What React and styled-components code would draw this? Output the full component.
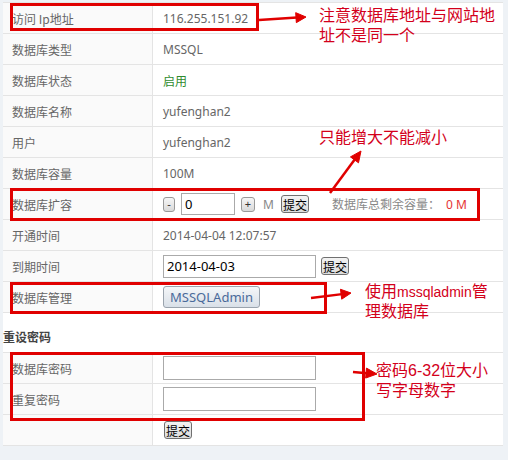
import React from 'react';
import styled, { createGlobalStyle } from 'styled-components';

const GlobalStyle = createGlobalStyle`
  body {
    margin: 0;
    background: #eef2f6;
    font-family: "Noto Sans", "Noto Sans CJK SC", sans-serif;
  }
`;

const Page = styled.div`
  position: relative;
  width: 508px;
  height: 460px;
  overflow: hidden;
  background: #eef2f6;
`;

const Panel = styled.div`
  margin: 2px 0 0 3px;
  width: 500px;
  background: #fff;
  border-top: 1px solid #e4e4e4;
`;

const Row = styled.div`
  display: grid;
  grid-template-columns: 150px 1fr;
  height: 31px;
  box-sizing: border-box;
  border-bottom: 1px solid #e4e4e4;
`;

const Label = styled.div`
  display: flex;
  align-items: center;
  padding-left: 9px;
  background: #fafafa;
  border-right: 1px solid #e4e4e4;
  color: #666;
  font-size: 12px;
  font-family: "Noto Sans CJK SC", sans-serif;
`;

const Value = styled.div`
  display: flex;
  align-items: center;
  gap: ${(p) => p.$gap ?? 6}px;
  padding-left: 10px;
  color: ${(p) => p.$color || '#666'};
  font-size: 12px;
`;

const SectionTitle = styled.div`
  height: 40px;
  box-sizing: border-box;
  display: flex;
  align-items: flex-end;
  padding: 0 0 7px 0;
  border-bottom: 1px solid #e4e4e4;
  color: #444;
  font-size: 12px;
  font-weight: 700;
  line-height: 16px;
  font-family: "Noto Sans CJK SC", sans-serif;
`;

const TextInput = styled.input`
  box-sizing: border-box;
  width: ${(p) => p.$w}px;
  height: ${(p) => p.$h}px;
  border: 1px solid #aaa;
  padding: 0 3px;
  font-size: 13px;
  font-family: "Noto Sans", sans-serif;
  color: #000;
  background: #fff;
  outline: none;
`;

const StepButton = styled.button`
  box-sizing: border-box;
  width: ${(p) => p.$w}px;
  height: 15px;
  padding: 0;
  border: 1px solid #999;
  border-radius: 3px;
  background: linear-gradient(#f6f6f6, #d9d9d9);
  color: #333;
  font-size: 11px;
  line-height: 12px;
  font-family: "Noto Sans", sans-serif;
`;

const SubmitButton = styled.button`
  box-sizing: border-box;
  width: 28px;
  height: 18px;
  padding: 0;
  border: 1px solid #707070;
  border-radius: 3px;
  background: linear-gradient(#f3f3f3, #dcdcdc);
  color: #000;
  font-size: 12px;
  line-height: 15px;
  white-space: nowrap;
  font-family: "Noto Sans CJK SC", sans-serif;
  margin-left: ${(p) => p.$ml || 0}px;
`;

const AdminButton = styled.button`
  box-sizing: border-box;
  width: 97px;
  height: 22px;
  padding: 0;
  border: 1px solid #9aa3ad;
  border-radius: 3px;
  background: linear-gradient(#f4f6f8, #d9e0e8);
  color: #4a6a9a;
  font-size: 13px;
  font-family: "Noto Sans", sans-serif;
`;

const Unit = styled.span`
  color: #888;
  font-size: 12px;
  margin: 0 1px 0 2px;
`;

const Remain = styled.span`
  margin-left: 17px;
  color: #888;
  font-family: "Noto Sans CJK SC", sans-serif;
`;

const RemainValue = styled.span`
  color: #e53333;
  margin-left: 6px;
  font-family: "Noto Sans", sans-serif;
`;

const Overlay = styled.div`
  position: absolute;
  inset: 0;
  pointer-events: none;
`;

const Box = styled.div`
  position: absolute;
  box-sizing: border-box;
  left: ${(p) => p.$x}px;
  top: ${(p) => p.$y}px;
  width: ${(p) => p.$w}px;
  height: ${(p) => p.$h}px;
  border: 3px solid #e00000;
`;

const Note = styled.div`
  position: absolute;
  left: ${(p) => p.$x}px;
  top: ${(p) => p.$y}px;
  color: #d3001b;
  font-size: 16px;
  line-height: 20px;
  white-space: nowrap;
  font-family: "Liberation Sans", "Noto Sans CJK SC", sans-serif;
`;

const Latin = styled.span`
  font-size: 14px;
`;

const Arrows = styled.svg`
  position: absolute;
  left: 0;
  top: 0;
`;

const Arrow = ({ x1, y1, x2, y2, len = 10, half = 5 }) => {
  const dx = x2 - x1;
  const dy = y2 - y1;
  const d = Math.hypot(dx, dy);
  const ux = dx / d;
  const uy = dy / d;
  const bx = x2 - ux * len;
  const by = y2 - uy * len;
  const pts = [
    [x2, y2],
    [bx - uy * half, by + ux * half],
    [bx + uy * half, by - ux * half],
  ]
    .map((p) => p.join(','))
    .join(' ');
  return (
    <g fill="#e00000" stroke="#e00000">
      <line x1={x1} y1={y1} x2={bx + ux} y2={by + uy} strokeWidth="2.5" />
      <polygon points={pts} strokeWidth="1" />
    </g>
  );
};

const InfoRow = ({ label, children, color, gap }) => (
  <Row>
    <Label>{label}</Label>
    <Value $color={color} $gap={gap}>{children}</Value>
  </Row>
);

const App = () => {
  return (
    <Page>
      <GlobalStyle />
      <Panel>
        <InfoRow label="访问 Ip地址">116.255.151.92</InfoRow>
        <InfoRow label="数据库类型">MSSQL</InfoRow>
        <InfoRow label="数据库状态" color="#2e8b2e">
          <span style={{ fontFamily: '"Noto Sans CJK SC", sans-serif' }}>启用</span>
        </InfoRow>
        <InfoRow label="数据库名称">yufenghan2</InfoRow>
        <InfoRow label="用户">yufenghan2</InfoRow>
        <InfoRow label="数据库容量">100M</InfoRow>
        <InfoRow label="数据库扩容" gap={6}>
          <StepButton $w={12}>-</StepButton>
          <TextInput $w={54} $h={22} defaultValue="0" />
          <StepButton $w={14}>+</StepButton>
          <Unit>M</Unit>
          <SubmitButton>提交</SubmitButton>
          <Remain>
            数据库总剩余容量：<RemainValue>0 M</RemainValue>
          </Remain>
        </InfoRow>
        <InfoRow label="开通时间">2014-04-04 12:07:57</InfoRow>
        <InfoRow label="到期时间" gap={5}>
          <TextInput $w={153} $h={23} defaultValue="2014-04-03" />
          <SubmitButton>提交</SubmitButton>
        </InfoRow>
        <InfoRow label="数据库管理">
          <AdminButton>MSSQLAdmin</AdminButton>
        </InfoRow>
        <SectionTitle>重设密码</SectionTitle>
        <InfoRow label="数据库密码">
          <TextInput $w={153} $h={24} type="password" />
        </InfoRow>
        <InfoRow label="重复密码">
          <TextInput $w={153} $h={24} type="password" />
        </InfoRow>
        <InfoRow label="">
          <SubmitButton $ml={1}>提交</SubmitButton>
        </InfoRow>
      </Panel>

      <Overlay>
        <Box $x={10} $y={3} $w={249} $h={28} />
        <Box $x={10} $y={188} $w={470} $h={33} />
        <Box $x={10} $y={282} $w={317} $h={32} />
        <Box $x={10} $y={352} $w={355} $h={69} />

        <Arrows width="508" height="460" viewBox="0 0 508 460">
          <Arrow x1={259} y1={20} x2={306} y2={17} />
          <Arrow x1={330} y1={193} x2={361} y2={151} len={11} />
          <Arrow x1={311} y1={298} x2={351} y2={293} />
          <Arrow x1={353} y1={372} x2={377} y2={374} len={11} half={5} />
        </Arrows>

        <Note $x={319} $y={6}>
          注意数据库地址与网站地
          <br />
          址不是同一个
        </Note>
        <Note $x={319} $y={128}>只能增大不能减小</Note>
        <Note $x={365} $y={282}>
          使用<Latin>mssqladmin</Latin>管
          <br />
          理数据库
        </Note>
        <Note $x={376} $y={361}>
          密码6-32位大小
          <br />
          写字母数字
        </Note>
      </Overlay>
    </Page>
  );
};

export default App;
